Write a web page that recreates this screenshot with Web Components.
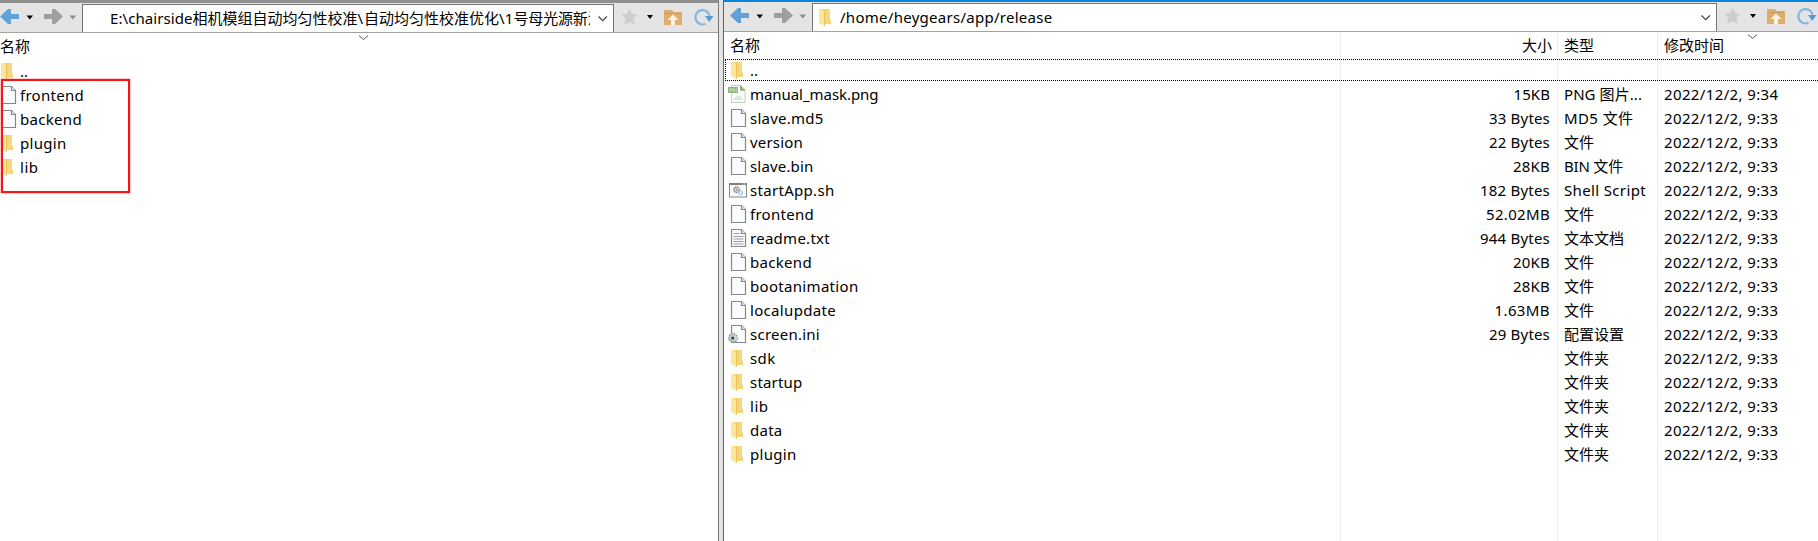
<!DOCTYPE html>
<html lang="zh-CN">
<head>
<meta charset="utf-8">
<title>File transfer</title>
<style>
html,body{margin:0;height:100%;overflow:hidden;background:#fff}
body{font:15px/24px "Noto Sans","Noto Sans CJK SC",sans-serif;color:#000}
</style>
</head>
<body>
<transfer-window></transfer-window>
<script>
// Text run whose letter spacing is tuned to an intended advance width.
class FitText extends HTMLElement {
  connectedCallback() {
    const root = this.attachShadow({mode: 'open'});
    root.innerHTML = '<style>:host{display:inline-block;white-space:pre;flex:none}span{display:inline-block}</style><span><slot></slot></span>';
    const w = parseFloat(this.getAttribute('w'));
    const s = root.querySelector('span');
    if (w) {
      const n = [...this.textContent].length;
      s.style.letterSpacing = ((w - s.getBoundingClientRect().width) / n) + 'px';
    }
  }
}
customElements.define('fit-text', FitText);

const page = '<path d="M3.500 2.500h10l4 4v13h-14z" fill="#fafbfb" stroke="#85888a" stroke-width="1.200"/><path d="M13.500 2.500v4h4" fill="#e8e9e9" stroke="#85888a" stroke-width="1.200"/>';
const ICONS = {
  folder: '<path d="M6 3h8v11h1v4H6z" fill="#f3d070"/><path d="M10 3h4v15H9z" fill="#f8d87c"/><path d="M3 3h2l4 3v14L3 17z" fill="#fde59c"/><path d="M9 6v14l-1-.5V5z" fill="#e9c35e"/>',
  file: page,
  txt: page + '<path d="M5.500 6.500h6M5.500 9.500h10M5.500 12h10M5.500 14.500h10M5.500 17h10" stroke="#9a9c9d" stroke-width="1"/>',
  png: '<path d="M3.500 2.500h9.500l4 4v13h-13.500z" fill="#fbfdfa" stroke="#bfd3b5"/><path d="M12 2l5.500 5.500H12z" fill="#9dbb8f"/><path d="M13 3v4h4" fill="none" stroke="#7fa66f"/><rect x="0" y="4" width="10" height="6" fill="#8fb67d"/><path d="M2 8.500v-3h1.500v1.500H2M5 8.500v-3l1.200 3v-3M9 5.500H8v3h1v-1.500" fill="none" stroke="#cfe0c8" stroke-width=".7"/><path d="M5 17l4-5 2 2 1.500-1.500L15 17z" fill="#d5e9e1"/>',
  sh: '<rect x="1.500" y="5" width="17" height="13" fill="#fafafa" stroke="#858585"/><path d="M1 5h18" stroke="#777" stroke-width="1.800"/><path d="M14 5h1m1 0h1" stroke="#eee"/><circle cx="8.500" cy="10.700" r="2.700" fill="#e7e7e7" stroke="#777" stroke-width="1.300" stroke-dasharray="1.300 .5"/><circle cx="8.500" cy="10.700" r=".9" fill="#777"/><circle cx="12.500" cy="13.600" r="1.900" fill="#edf7fc" stroke="#7fb0cc" stroke-width="1.200" stroke-dasharray="1 .4"/>',
  ini: page + '<circle cx="5" cy="15" r="4.200" fill="#c8cdd1" stroke="#9199a0" stroke-width="1.600" stroke-dasharray="1.500 1"/><circle cx="5" cy="15" r="3.300" fill="#bfc6cb"/><circle cx="4.700" cy="15" r="1.500" fill="#3c4248"/><path d="M7 13l1.500 2-1 2" stroke="#e9f0f4" fill="none"/>'
};

class FileIcon extends HTMLElement {
  connectedCallback() {
    this.attachShadow({mode: 'open'}).innerHTML =
      `<style>:host{display:block;flex:none;width:20px;height:24px}svg{display:block}</style><svg width="20" height="24" viewBox="0 0 20 24">${ICONS[this.getAttribute('name')]}</svg>`;
  }
}
customElements.define('file-icon', FileIcon);

class NavBar extends HTMLElement {
  connectedCallback() {
    this.attachShadow({mode: 'open'}).innerHTML = `<style>
      :host{display:flex;box-sizing:border-box;height:30px;background:#e4e4e4;border-bottom:1px solid #a2a2a2;overflow:hidden}
      svg{display:block;flex:none}
      .path{flex:1;min-width:0;display:flex;box-sizing:border-box;height:29px;margin-top:1px;border:1px solid #757575;border-width:1px 1px 0;background:#fff}
      .addr{flex:1;min-width:0;overflow:hidden;display:flex;line-height:26px;margin-right:1px}
      .path svg{margin-right:-1px}
    </style>
    <svg width="82" height="29" viewBox="0 0 82 29">
      <path d="M0 13.500L8 6h3v5h8v5h-8v5H8z" fill="#60a2d7"/><path d="M26.500 12.500h6.500l-3.200 4z" fill="#000"/>
      <path d="M63 13.500L55 6h-3v5h-8v5h8v5h3z" fill="#9f9f9f"/><path d="M69.500 12.500h6.500l-3.200 4z" fill="#8c8c8c"/>
    </svg>
    <div class="path"><div class="addr"><slot></slot></div>
    <svg width="23" height="28" viewBox="0 0 23 28"><path d="M7.500 11.500l4.200 4.200 4.200-4.200" fill="none" stroke="#444" stroke-width="1.200"/></svg></div>
    <svg width="104" height="29" viewBox="0 0 104 29">
      <path d="M15.500 6l2.500 5 5.500.8-4 3.900 1.400 6.300-5.400-3-5.400 3 1.400-6.300-4-3.900 5.500-.8z" fill="#cdcdcd"/>
      <path d="M33 12h6l-3 4z" fill="#000"/>
      <path d="M50 7h8l1.500 2H68v13H50z" fill="#dfad70"/><path d="M51 10.500h16" stroke="#d39a57"/><path d="M59 11.500l5.500 5.500h-3.500v5h-4v-5h-3.500z" fill="#fff1df"/>
      <path d="M91.500 20.800A7.200 7.200 0 1 1 95.700 14" fill="none" stroke="#84b6e0" stroke-width="2.200"/><path d="M91 13h8.500l-4.200 6z" fill="#529bd3"/>
    </svg>`;
  }
}
customElements.define('nav-bar', NavBar);

class FileRow extends HTMLElement {
  connectedCallback() {
    const a = n => this.getAttribute(n) || '';
    this.attachShadow({mode: 'open'}).innerHTML = `<style>
      :host{display:grid;grid-template-columns:var(--cols);height:24px;line-height:22px;white-space:pre}
      .name{display:flex;gap:2px;padding-left:var(--lead)}
      .size{text-align:right;padding-right:8px}
      .type,.date{padding-left:6px}
    </style>
    <div class="name"><file-icon name="${a('icon')}"></file-icon><fit-text w="${a('w')}">${a('name')}</fit-text></div>
    ${a('type') ? `<div class="size">${a('size') ? `<fit-text w="${a('sw')}">${a('size')}</fit-text>` : ''}</div>
    <div class="type"><fit-text w="${a('tw')}">${a('type')}</fit-text></div>
    <div class="date"><fit-text w="114.500">${a('date')}</fit-text></div>` : ''}`;
  }
}
customElements.define('file-row', FileRow);

const row = (icon, name, w, size, sw, type, tw, date = '2022/12/2, 9:33') =>
  `<file-row icon="${icon}" name="${name}" w="${w}" size="${size || ''}" sw="${sw || ''}" type="${type || ''}" tw="${tw || ''}" date="${date}"></file-row>`;
const caret = '<svg class="sort" width="11" height="6" viewBox="0 0 11 6"><path d="M1 .5l4.500 4 4.500-4" fill="none" stroke="#555" stroke-width="1"/></svg>';

class LocalPane extends HTMLElement {
  connectedCallback() {
    this.attachShadow({mode: 'open'}).innerHTML = `<style>
      :host{display:block;position:relative;box-sizing:border-box;width:719px;height:541px;border-top:3px solid #8f8f8f;border-right:1px solid #787878;background:#fff;overflow:hidden;--cols:1fr;--lead:0px}
      fit-text:first-child{margin-left:27px}
      .head{position:relative;height:27px;line-height:27px}
      .rows{margin-left:-2px}
      .sort{position:absolute;left:358px;top:2px}
      .mark{position:absolute;left:1px;top:76px;width:125px;height:110px;border:2px solid #f81414;box-shadow:0 0 0 .5px #ff9c9c}
    </style>
    <nav-bar><fit-text w="82.500">E:\\chairside</fit-text><fit-text w="165">相机模组自动均匀性校准</fit-text><fit-text w="6.500">\\</fit-text><fit-text w="135">自动均匀性校准优化</fit-text><fit-text w="14.500">\\1</fit-text><fit-text w="89">号母光源新治</fit-text></nav-bar>
    <div class="head">名称${caret}</div>
    <div class="rows">${row('folder','..',8)}${row('file','frontend',64)}${row('file','backend',62)}${row('folder','plugin',46.5)}${row('folder','lib',18.5)}</div>
    <div class="mark"></div>`;
  }
}
customElements.define('local-pane', LocalPane);

class RemotePane extends HTMLElement {
  connectedCallback() {
    this.attachShadow({mode: 'open'}).innerHTML = `<style>
      :host{display:flex;flex-direction:column;box-sizing:border-box;flex:1;height:541px;border-top:2px solid #0786dc;border-left:1px solid #0b7bc4;background:#fff;min-width:0;overflow:hidden;--cols:617px 217px 100px 1fr;--lead:4px}
      nav-bar{padding-left:6px;margin-right:-3px}
      file-icon{margin:2px 0 0 3px}
      nav-bar fit-text{margin-left:4px}
      .table{position:relative;flex:1}
      .head,.lines{display:grid;grid-template-columns:617px 217px 100px 1fr}
      .lines{position:absolute;inset:0}
      .lines i{box-sizing:border-box;border-right:1px solid #e6f0fa}
      .lines i:last-child{border:0}
      .head{position:relative;height:27px;line-height:27px}
      .head div{padding-left:6px}
      .head .r{text-align:right;padding-right:6px}
      .sort{position:absolute;left:1023px;top:2px}
      .rows{position:relative}
      .focus{position:absolute;left:1px;right:-2px;top:0;height:20px;border:1px dotted #000}
    </style>
    <nav-bar><file-icon name="folder"></file-icon><fit-text w="212.500">/home/heygears/app/release</fit-text></nav-bar>
    <div class="table"><div class="lines"><i></i><i></i><i></i><i></i></div>
    <div class="head"><div>名称</div><div class="r">大小</div><div>类型</div><div>修改时间</div>${caret}</div>
    <div class="rows"><div class="focus"></div>
    ${row('folder','..',8)}
    ${row('png','manual_mask.png',128.5,'15KB',36.5,'PNG 图片...',78,'2022/12/2, 9:34')}
    ${row('file','slave.md5',73.5,'33 Bytes',61,'MD5 文件',69.5)}
    ${row('file','version',53,'22 Bytes',61,'文件',30)}
    ${row('file','slave.bin',63.5,'28KB',37,'BIN 文件',59)}
    ${row('sh','startApp.sh',84.5,'182 Bytes',70,'Shell Script',82)}
    ${row('file','frontend',64,'52.02MB',64,'文件',30)}
    ${row('txt','readme.txt',80,'944 Bytes',70,'文本文档',60)}
    ${row('file','backend',62,'20KB',37,'文件',30)}
    ${row('file','bootanimation',108.5,'28KB',37,'文件',30)}
    ${row('file','localupdate',86,'1.63MB',55.5,'文件',30)}
    ${row('ini','screen.ini',70,'29 Bytes',61,'配置设置',60)}
    ${row('folder','sdk',25.5,'','','文件夹',45)}
    ${row('folder','startup',52.5,'','','文件夹',45)}
    ${row('folder','lib',18.5,'','','文件夹',45)}
    ${row('folder','data',32.5,'','','文件夹',45)}
    ${row('folder','plugin',46.5,'','','文件夹',45)}
    </div></div>`;
  }
}
customElements.define('remote-pane', RemotePane);

class TransferWindow extends HTMLElement {
  connectedCallback() {
    this.attachShadow({mode: 'open'}).innerHTML = `<style>
      :host{display:flex;width:1818px;height:541px;overflow:hidden}
      .gutter{width:4px;background:#e3e3e3;flex:none}
      local-pane{flex:none}
    </style><local-pane></local-pane><div class="gutter"></div><remote-pane></remote-pane>`;
  }
}
customElements.define('transfer-window', TransferWindow);
</script>
</body>
</html>
